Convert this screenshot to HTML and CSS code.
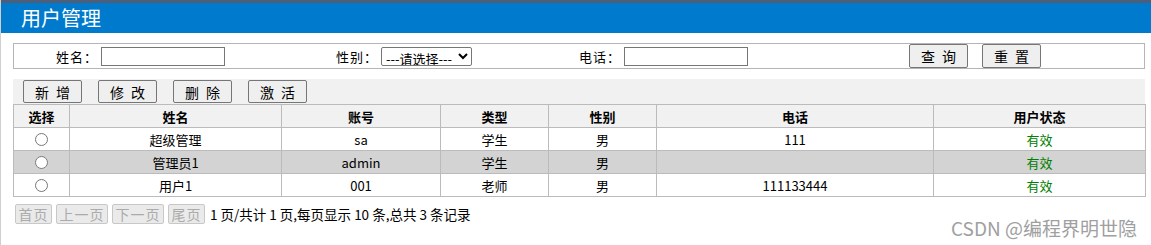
FILE: index.html
```html
<!DOCTYPE html>
<html lang="zh-CN">
<head>
    <meta charset="UTF-8">
    <title>用户管理</title>
    <link rel="stylesheet" href="styles.css">
</head>
<body>

    <header class="title_bar">
        <h1>用户管理</h1>
    </header>

    <main class="page">
        <form class="search_box">
            <label class="search_label lbl_name">姓名：</label>
            <input type="text" class="search_input">
            <label class="search_label lbl_sex">性别：</label>
            <select class="search_select">
                <option>---请选择---</option>
            </select>
            <label class="search_label lbl_tel">电话：</label>
            <input type="text" class="search_input">
            <button type="button" class="btn btn_query">查 询</button>
            <button type="button" class="btn btn_reset">重 置</button>
        </form>

        <div class="toolbar">
            <button type="button" class="btn">新 增</button>
            <button type="button" class="btn">修 改</button>
            <button type="button" class="btn">删 除</button>
            <button type="button" class="btn">激 活</button>
        </div>

        <table class="grid">
            <colgroup>
                <col style="width:56px">
                <col style="width:212px">
                <col style="width:159px">
                <col style="width:108px">
                <col style="width:108px">
                <col style="width:277px">
                <col>
            </colgroup>
            <thead>
            <tr>
                <th>选择</th>
                <th>姓名</th>
                <th>账号</th>
                <th>类型</th>
                <th>性别</th>
                <th>电话</th>
                <th>用户状态</th>
            </tr>
            </thead>
            <tbody>
            <tr>
                <td><input type="radio" name="sel"></td>
                <td>超级管理</td>
                <td>sa</td>
                <td>学生</td>
                <td>男</td>
                <td>111</td>
                <td class="ok">有效</td>
            </tr>
            <tr class="alt">
                <td><input type="radio" name="sel"></td>
                <td>管理员1</td>
                <td>admin</td>
                <td>学生</td>
                <td>男</td>
                <td></td>
                <td class="ok">有效</td>
            </tr>
            <tr>
                <td><input type="radio" name="sel"></td>
                <td>用户1</td>
                <td>001</td>
                <td>老师</td>
                <td>男</td>
                <td>111133444</td>
                <td class="ok">有效</td>
            </tr>
            </tbody>
        </table>

        <div class="pager">
            <button type="button" class="pg_btn pg_short" disabled>首页</button>
            <button type="button" class="pg_btn" disabled>上一页</button>
            <button type="button" class="pg_btn" disabled>下一页</button>
            <button type="button" class="pg_btn pg_short" disabled>尾页</button>
            <span class="pg_info">1 页/共计 1 页,每页显示 10 条,总共 3 条记录</span>
        </div>
    </main>

    <div class="watermark">CSDN @编程界明世隐</div>

</body>
</html>
```

FILE: styles.css
```css
body {
    margin: 0;
    padding: 0;
    height: 245px;
    overflow: hidden;
    font-family: "Noto Sans CJK SC", "Noto Sans", sans-serif;
    font-size: 13px;
    color: #000;
    background: #fff;
    border-left: 1px solid #d0d0d0;
    box-sizing: border-box;
    position: relative;
}

.title_bar {
    height: 30px;
    border-top: 3px solid #4d5f78;
    background: #007acc;
}

.title_bar h1 {
    margin: 0;
    padding-left: 20px;
    font-size: 20px;
    font-weight: normal;
    line-height: 30px;
    color: #fff;
}

.page {
    padding: 10px 5px 0 12px;
}

.search_box {
    display: flex;
    align-items: center;
    width: 1130px;
    height: 24px;
    border: 1px solid #b5b5b5;
    margin: 0;
}

.search_label {
    text-align: right;
    margin-right: 3px;
    letter-spacing: 1px;
}

.lbl_name { width: 84px; }
.lbl_sex { width: 153px; }
.lbl_tel { width: 149px; }

.search_input {
    width: 124px;
    height: 19px;
    box-sizing: border-box;
    border: 1px solid #767676;
    padding: 0 2px;
    margin: 0;
}

.search_select {
    width: 91px;
    height: 19px;
    box-sizing: border-box;
    border: 1px solid #767676;
    border-radius: 2px;
    font-family: inherit;
    font-size: 13px;
    padding: 0;
    margin: 0;
    background: #fff;
}

.btn {
    width: 59px;
    height: 24px;
    box-sizing: border-box;
    border: 1px solid #767676;
    border-radius: 2px;
    background: #efefef;
    font-family: inherit;
    font-size: 14px;
    letter-spacing: 2px;
    color: #000;
    padding: 0 0 0 2px;
    margin: 0;
    line-height: 20px;
}

.btn_query { margin-left: 161px; }
.btn_reset { margin-left: 14px; }

.toolbar {
    display: flex;
    gap: 16px;
    width: 1122px;
    height: 24px;
    margin-top: 10px;
    padding: 1px 0 0 10px;
    background: #f1f1f1;
    box-sizing: content-box;
}

.toolbar .btn {
    height: 23px;
}

table.grid {
    width: 1133px;
    border-collapse: collapse;
    table-layout: fixed;
    border: 1px solid #bbb;
}

table.grid th, table.grid td {
    border: 1px solid #bbb;
    height: 22px;
    padding: 0;
    text-align: center;
    white-space: nowrap;
    overflow: hidden;
}

table.grid th {
    background: #f1f1f1;
    font-weight: bold;
}

table.grid tr.alt td {
    background: #d3d3d3;
}

table.grid td.ok {
    color: #008000;
}

table.grid input[type="radio"] {
    margin: 0;
    width: 13px;
    height: 13px;
    vertical-align: -1px;
}

.pager {
    display: flex;
    align-items: center;
    gap: 4px;
    margin-top: 7px;
    padding-left: 2px;
}

.pg_btn {
    width: 52px;
    height: 20px;
    padding: 0;
    border: 1px solid #c8c8c8;
    border-radius: 2px;
    background: #eaeaea;
    color: #ababab;
    font-family: inherit;
    font-size: 14px;
    letter-spacing: 1px;
    line-height: 16px;
}

.pg_short {
    width: 37px;
}

.pg_info {
    margin-left: 1px;
    font-size: 13.5px;
}

.watermark {
    position: absolute;
    right: 14px;
    bottom: 4px;
    font-size: 19px;
    color: #a0a0a0;
}
```
